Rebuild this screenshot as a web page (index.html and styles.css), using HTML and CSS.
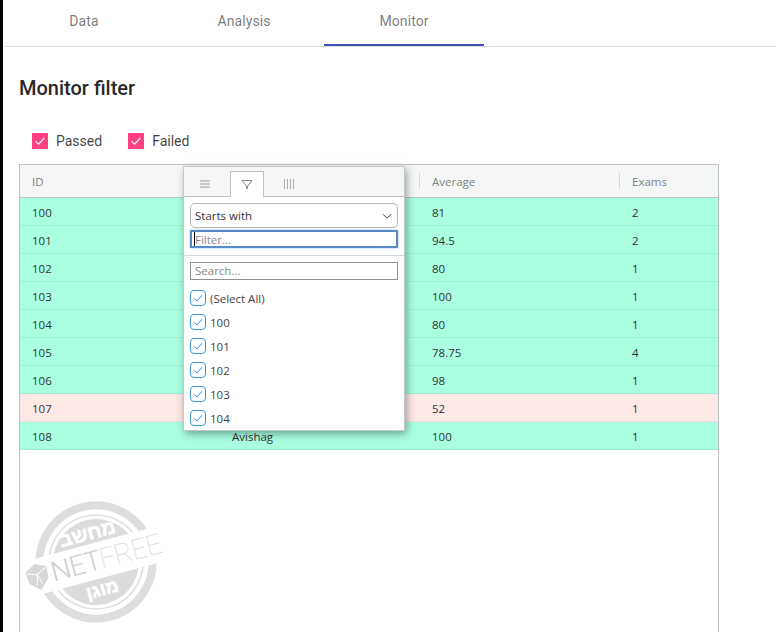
FILE: index.html
```html
<!DOCTYPE html>
<html lang="en">
<head>
<meta charset="utf-8">
<title>Monitor filter</title>
<link rel="stylesheet" href="styles.css">
</head>
<body>
<div class="page">
  <nav class="tabs">
    <div class="tab">Data</div>
    <div class="tab">Analysis</div>
    <div class="tab active">Monitor</div>
  </nav>
  <main class="content">
    <h1 class="title">Monitor filter</h1>
    <div class="filters">
      <label class="pink-check"><span class="pink-box"><svg viewBox="0 0 16 16" width="16" height="16"><path d="M3.500 8.200l3 3 6-6.200" fill="none" stroke="#fff" stroke-width="1.200"/></svg></span>Passed</label>
      <label class="pink-check"><span class="pink-box"><svg viewBox="0 0 16 16" width="16" height="16"><path d="M3.500 8.200l3 3 6-6.200" fill="none" stroke="#fff" stroke-width="1.200"/></svg></span>Failed</label>
    </div>
    <section class="grid">
      <div class="row head">
        <div class="cell">ID</div><div class="cell"></div><div class="cell sep">Average</div><div class="cell sep">Exams</div>
      </div>
      <div class="row pass"><div class="cell">100</div><div class="cell"></div><div class="cell">81</div><div class="cell">2</div></div>
      <div class="row pass"><div class="cell">101</div><div class="cell"></div><div class="cell">94.5</div><div class="cell">2</div></div>
      <div class="row pass"><div class="cell">102</div><div class="cell"></div><div class="cell">80</div><div class="cell">1</div></div>
      <div class="row pass"><div class="cell">103</div><div class="cell"></div><div class="cell">100</div><div class="cell">1</div></div>
      <div class="row pass"><div class="cell">104</div><div class="cell"></div><div class="cell">80</div><div class="cell">1</div></div>
      <div class="row pass"><div class="cell">105</div><div class="cell"></div><div class="cell">78.75</div><div class="cell">4</div></div>
      <div class="row pass"><div class="cell">106</div><div class="cell"></div><div class="cell">98</div><div class="cell">1</div></div>
      <div class="row fail"><div class="cell">107</div><div class="cell"></div><div class="cell">52</div><div class="cell">1</div></div>
      <div class="row pass"><div class="cell">108</div><div class="cell">Avishag</div><div class="cell">100</div><div class="cell">1</div></div>
    </section>
  </main>

  <div class="popup">
    <div class="popup-tabs">
      <div class="ptab"><svg width="12" height="12" viewBox="0 0 12 12"><path d="M1 3h10M1 6h10M1 9h10" stroke="#999" stroke-width="1"/></svg></div>
      <div class="ptab on"><svg width="12" height="12" viewBox="0 0 12 12"><path d="M1 1.500h10L7 6.500 6 10 5 6.500z" fill="none" stroke="#777" stroke-width=".9"/></svg></div>
      <div class="ptab"><svg width="12" height="12" viewBox="0 0 12 12"><path d="M1.500 1v10M4.500 1v10M7.500 1v10M10.500 1v10" stroke="#aaa" stroke-width="1"/></svg></div>
    </div>
    <div class="popup-filter">
      <div class="select">Starts with<svg width="12" height="12" viewBox="0 0 12 12"><path d="M2 4.200l4 4 4-4" fill="none" stroke="#444" stroke-width="1"/></svg></div>
      <div class="input focus"><span class="caret"></span>Filter...</div>
    </div>
    <div class="popup-list">
      <div class="input search">Search...</div>
      <div class="item"><span class="blue-box"><svg width="12" height="12" viewBox="0 0 12 12"><path d="M2 6.300l2.800 2.800L10 3.300" fill="none" stroke="#2b8fd8" stroke-width="1"/></svg></span>(Select All)</div>
      <div class="item"><span class="blue-box"><svg width="12" height="12" viewBox="0 0 12 12"><path d="M2 6.300l2.800 2.800L10 3.300" fill="none" stroke="#2b8fd8" stroke-width="1"/></svg></span>100</div>
      <div class="item"><span class="blue-box"><svg width="12" height="12" viewBox="0 0 12 12"><path d="M2 6.300l2.800 2.800L10 3.300" fill="none" stroke="#2b8fd8" stroke-width="1"/></svg></span>101</div>
      <div class="item"><span class="blue-box"><svg width="12" height="12" viewBox="0 0 12 12"><path d="M2 6.300l2.800 2.800L10 3.300" fill="none" stroke="#2b8fd8" stroke-width="1"/></svg></span>102</div>
      <div class="item"><span class="blue-box"><svg width="12" height="12" viewBox="0 0 12 12"><path d="M2 6.300l2.800 2.800L10 3.300" fill="none" stroke="#2b8fd8" stroke-width="1"/></svg></span>103</div>
      <div class="item"><span class="blue-box"><svg width="12" height="12" viewBox="0 0 12 12"><path d="M2 6.300l2.800 2.800L10 3.300" fill="none" stroke="#2b8fd8" stroke-width="1"/></svg></span>104</div>
    </div>
  </div>

  <svg class="stamp" width="150" height="142" viewBox="0 0 150 142">
    <g transform="translate(76 72) rotate(-15)">
      <circle r="56.500" fill="none" stroke="#dedede" stroke-width="8"/>
      <circle r="47" fill="none" stroke="#dedede" stroke-width="1.500"/>
      <circle r="43" fill="#dcdcdc"/>
      <rect x="-75" y="-19" width="150" height="36" fill="#fff"/>
      <path d="M-71-8l11-6 11 5-1 12-10 10-10-9z" fill="#d8d8d8"/>
      <path d="M-70-6l10 3 10-5M-63 8l3-11 3 10" fill="none" stroke="#fff" stroke-width="1"/>
      <text class="stamp-net" x="-46" y="8">NET</text>
      <text class="stamp-free" x="4" y="8">FREE</text>
      <text class="stamp-he" x="-1" y="-23" text-anchor="middle">מחשב</text>
      <text class="stamp-he low" x="-1" y="34" text-anchor="middle">מוגן</text>
    </g>
  </svg>
</div>
</body>
</html>
```
FILE: styles.css
```css
* { box-sizing: border-box; }
html, body { margin: 0; height: 100%; overflow: hidden; background: #fff; }
.page {
  position: relative;
  height: 632px;
  border-left: 3px solid #000;
  padding-left: 1px;
  font-family: Roboto, sans-serif;
  overflow: hidden;
}
.tabs {
  display: flex;
  height: 47px;
  border-bottom: 1px solid #e0e0e0;
}
.tab {
  width: 160px;
  height: 46px;
  padding-top: 13px;
  text-align: center;
  font-size: 14px;
  line-height: 16px;
  color: rgba(0, 0, 0, .54);
  letter-spacing: .1px;
}
.tab.active { border-bottom: 2px solid #3f51b5; }
.content { padding: 0 0 0 15px; }
.title {
  margin: 28px 0 0;
  font-size: 20px;
  font-weight: 500;
  line-height: 26px;
  color: rgba(0, 0, 0, .87);
}
.filters {
  display: flex;
  gap: 26px;
  margin: 32px 0 0 13px;
  height: 31px;
}
.pink-check {
  display: flex;
  align-items: center;
  gap: 8px;
  height: 16px;
  font-size: 14px;
  color: rgba(0, 0, 0, .75);
}
.pink-box { width: 16px; height: 16px; background: #ff4081; display: block; }
.pink-box svg { display: block; }
.grid {
  width: 700px;
  height: 480px;
  border: 1px solid #bdc3c7;
  border-bottom: 0;
  font-family: "Open Sans", sans-serif;
  font-size: 11.500px;
  color: #333;
}
.row {
  display: grid;
  grid-template-columns: repeat(4, 200px);
  height: 28px;
  align-items: center;
  border-bottom: 1px solid #d9dcde;
}
.head {
  height: 33px;
  background: #f5f7f7;
  border-bottom: 1px solid #bdc3c7;
  color: #7a7f82;
}
.cell { padding: 2px 0 0 12px; line-height: 16px; min-height: 16px; white-space: nowrap; }
.sep { position: relative; }
.sep::before {
  content: "";
  position: absolute;
  left: -1px;
  top: 1px;
  height: 16px;
  border-left: 1px solid #d5d8da;
}
.pass { background: #a9ffe0; border-bottom-color: #9eefd2; }
.fail { background: #fde8e6; border-bottom-color: #eedcda; }

.popup {
  position: absolute;
  left: 180px;
  top: 166px;
  width: 222px;
  height: 265px;
  background: #fff;
  border: 1px solid #c3c7ca;
  box-shadow: 2px 3px 8px rgba(0, 0, 0, .35);
  font-family: "Open Sans", sans-serif;
  font-size: 11.500px;
  color: #444;
  overflow: hidden;
}
.popup-tabs {
  display: flex;
  height: 30px;
  padding: 4px 0 0 4px;
  background: #f5f7f7;
  border-bottom: 1px solid #bdc3c7;
}
.ptab {
  width: 34px;
  height: 26px;
  margin-right: 8px;
  display: flex;
  align-items: center;
  justify-content: center;
}
.ptab.on {
  background: #fff;
  border: 1px solid #bdc3c7;
  border-bottom: 0;
}
.popup-filter {
  padding: 6px;
  border-bottom: 1px solid #d5d8da;
  height: 59px;
}
.select {
  display: flex;
  align-items: center;
  justify-content: space-between;
  height: 25px;
  padding: 0 4px;
  border: 1px solid #b4b4b4;
  border-radius: 5px;
  color: #333;
}
.input {
  display: flex;
  align-items: center;
  height: 18px;
  padding-left: 4px;
  border: 1px solid #8f8f8f;
  color: #888;
}
.input.focus {
  margin-top: 2px;
  border: 2px solid #5a8ac6;
  box-shadow: 0 0 2px #9cbde6;
  padding-left: 2px;
}
.caret { width: 1px; height: 14px; background: #000; }
.popup-list { padding: 6px 6px 0; }
.item {
  display: flex;
  align-items: center;
  gap: 4px;
  height: 24px;
  color: #444;
}
.search { margin-bottom: 6px; padding-bottom: 2px; }
.blue-box {
  width: 16px;
  height: 16px;
  border: 1.500px solid #3a97dd;
  border-radius: 4px;
  display: flex;
  align-items: center;
  justify-content: center;
}

.stamp { position: absolute; left: 17px; top: 490px; }
.stamp-net { font-family: Roboto, sans-serif; font-size: 28px; font-weight: 300; letter-spacing: -.7px; fill: #cfcfcf; }
.stamp-free { font-family: Roboto, sans-serif; font-size: 28px; font-weight: 100; letter-spacing: -.7px; fill: #d8d8d8; }
.stamp-he { font-family: "Liberation Sans", "DejaVu Sans", sans-serif; font-size: 20px; font-weight: 700; fill: #fff; stroke: #fff; stroke-width: .5px; }
.stamp-he.low { font-size: 18px; }
```
